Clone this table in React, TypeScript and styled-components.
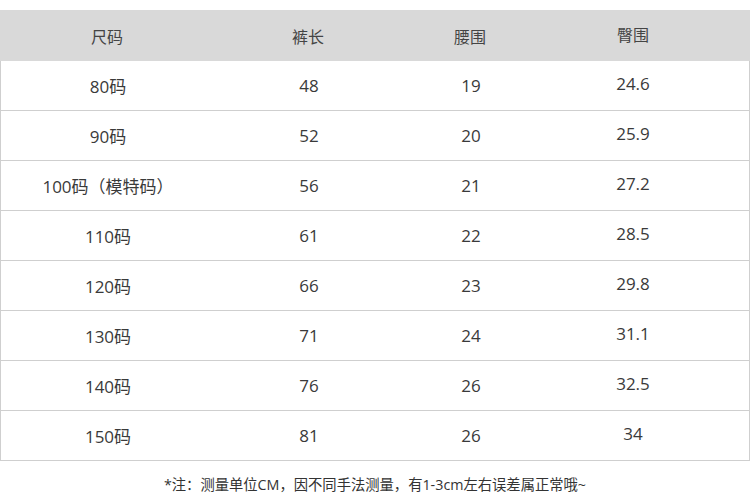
import { createGlobalStyle, styled } from "styled-components"

const GlobalStyle = createGlobalStyle`
    body {
        margin: 0;
        background: #ffffff;
        font-family: "Open Sans", "Noto Sans CJK SC", sans-serif;
    }
`

const Page = styled.div`
    width: 750px;
    height: 500px;
    padding-top: 10px;
    box-sizing: border-box;
    color: #3a3a3a;
`

const Row = styled.div<{ $head?: boolean }>`
    display: grid;
    grid-template-columns: 214px 188px 136px 1fr;
    height: ${p => p.$head ? "52px" : "49px"};
    background: ${p => p.$head ? "#d9d9d9" : "#ffffff"};
    border-left: ${p => p.$head ? "none" : "1px solid #cfcfcf"};
    border-right: ${p => p.$head ? "none" : "1px solid #cfcfcf"};
    border-bottom: ${p => p.$head ? "none" : "1px solid #cfcfcf"};
    margin-bottom: ${p => p.$head ? "-1px" : "0"};
    font-size: ${p => p.$head ? "16px" : "17px"};
    color: ${p => p.$head ? "#444" : "#3a3a3a"};
`

const Cell = styled.div<{ $last?: boolean }>`
    display: flex;
    align-items: center;
    justify-content: center;
    padding-right: ${p => p.$last ? "22px" : "0"};
    padding-bottom: ${p => p.$last ? "4px" : "1px"};
    white-space: nowrap;
`

const Note = styled.div`
    margin-top: 12px;
    text-align: center;
    font-size: 14.3px;
    color: #333;
`

const rows = [
    ["80码", "48", "19", "24.6"],
    ["90码", "52", "20", "25.9"],
    ["100码（模特码）", "56", "21", "27.2"],
    ["110码", "61", "22", "28.5"],
    ["120码", "66", "23", "29.8"],
    ["130码", "71", "24", "31.1"],
    ["140码", "76", "26", "32.5"],
    ["150码", "81", "26", "34"],
]

export default function App() {
    return (
        <>
            <GlobalStyle />
            <Page>
                <Row $head>
                    <Cell>尺码</Cell>
                    <Cell>裤长</Cell>
                    <Cell>腰围</Cell>
                    <Cell $last>臀围</Cell>
                </Row>
                {rows.map((r, i) => (
                    <Row key={i}>
                        <Cell>{r[0]}</Cell>
                        <Cell>{r[1]}</Cell>
                        <Cell>{r[2]}</Cell>
                        <Cell $last>{r[3]}</Cell>
                    </Row>
                ))}
                <Note>*注：测量单位CM，因不同手法测量，有1-3cm左右误差属正常哦~</Note>
            </Page>
        </>
    )
}
